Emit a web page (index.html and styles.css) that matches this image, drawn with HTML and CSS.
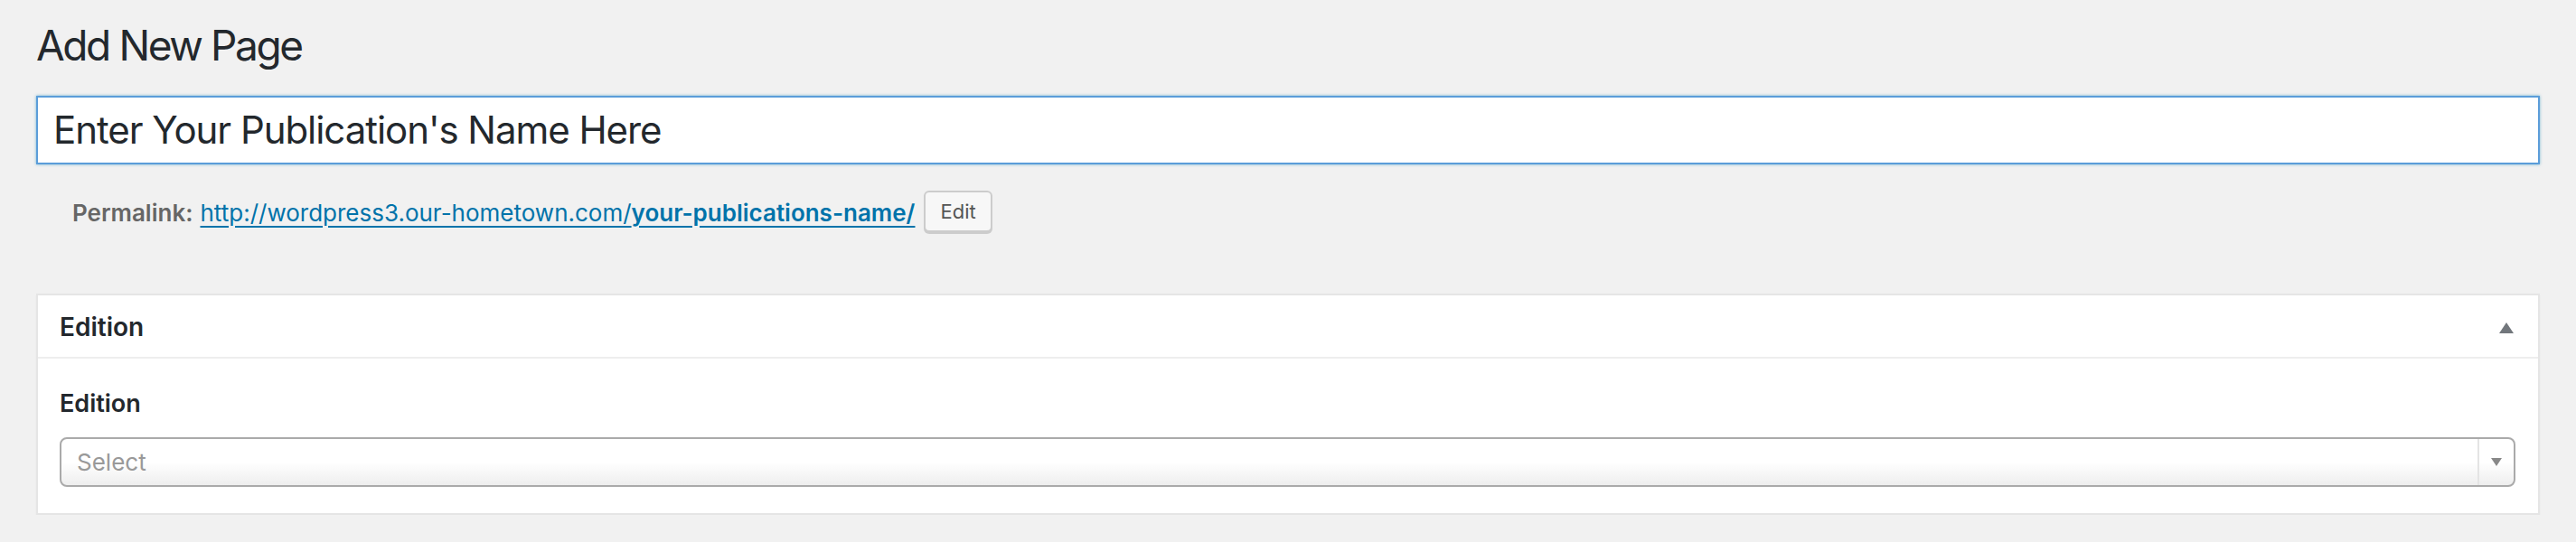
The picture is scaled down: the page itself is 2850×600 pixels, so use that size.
FILE: index.html
```html
<!DOCTYPE html>
<html lang="en">
<head>
<meta charset="utf-8">
<title>Add New Page</title>
<link rel="stylesheet" href="styles.css">
</head>
<body>
<div class="wrap">
  <h1 class="page-title">Add New Page</h1>
  <div class="title-input">Enter Your Publication's Name Here</div>
  <div class="slug-box">
    <span class="slug-label">Permalink:</span>
    <a class="slug-link" href="#">http://wordpress3.our-hometown.com/<strong>your-publications-name/</strong></a>
    <button class="btn" type="button">Edit</button>
  </div>
  <div class="postbox">
    <div class="postbox-head">
      <h2 class="postbox-title">Edition</h2>
      <span class="toggle-arrow"></span>
    </div>
    <div class="postbox-body">
      <div class="field-label">Edition</div>
      <div class="select">
        <span class="select-text">Select</span>
        <span class="select-arrow"><span class="caret"></span></span>
      </div>
    </div>
  </div>
</div>
</body>
</html>
```
FILE: styles.css
```css
* { box-sizing: border-box; }
html, body { margin: 0; padding: 0; }
body {
  background: #f1f1f1;
  font-family: Inter, "Liberation Sans", sans-serif;
  color: #23282d;
}
.wrap {
  padding: 20px 40px 0 40px;
}
.page-title {
  margin: 0;
  font-size: 46px;
  font-weight: 400;
  line-height: 60px;
  color: #23282d;
  letter-spacing: -2.4px;
}
.title-input {
  margin-top: 26px;
  height: 76px;
  background: #fff;
  border: 2px solid #5b9dd9;
  box-shadow: 0 0 3px rgba(30, 140, 190, 0.6);
  padding: 0 17px;
  font-size: 42px;
  line-height: 72px;
  color: #23282d;
  letter-spacing: -1.05px;
}
.slug-box {
  margin-top: 29px;
  padding-left: 40px;
  display: flex;
  align-items: center;
  height: 48px;
  font-size: 26px;
}
.slug-label {
  font-weight: 600;
  color: #666;
  margin-right: 8px;
}
.slug-link {
  color: #0073aa;
  text-decoration: underline;
  text-decoration-thickness: 2px;
  text-underline-offset: 5px;
}
.slug-link strong { font-weight: 600; }
.btn {
  margin-left: 10px;
  height: 46px;
  padding: 0 16px;
  border: 2px solid #ccc;
  border-radius: 6px;
  background: #f7f7f7;
  box-shadow: 0 2px 0 #ccc;
  font-family: Inter, "Liberation Sans", sans-serif;
  font-size: 22px;
  color: #555;
  align-self: flex-start;
}
.postbox {
  margin-top: 66px;
  background: #fff;
  border: 2px solid #e5e5e5;
  box-shadow: 0 2px 2px rgba(0, 0, 0, 0.04);
}
.postbox-head {
  display: flex;
  align-items: center;
  justify-content: space-between;
  padding: 16px 27px 13px 24px;
  border-bottom: 2px solid #eee;
}
.postbox-title {
  margin: 0;
  font-size: 28px;
  font-weight: 600;
  line-height: 39px;
  color: #23282d;
}
.toggle-arrow {
  width: 0;
  height: 0;
  border-left: 8px solid transparent;
  border-right: 8px solid transparent;
  border-bottom: 12px solid #72777c;
}
.postbox-body {
  padding: 32px 25px 29px 24px;
}
.field-label {
  font-size: 27px;
  font-weight: 600;
  line-height: 36px;
  color: #23282d;
}
.select {
  margin-top: 19px;
  height: 55px;
  display: flex;
  align-items: stretch;
  border: 2px solid #aaa;
  border-radius: 8px;
  background: linear-gradient(to bottom, #fff 50%, #eee 100%);
}
.select-text {
  flex: 1;
  padding-left: 17px;
  font-size: 26px;
  line-height: 51px;
  color: #999;
}
.select-arrow {
  width: 40px;
  border-left: 2px solid #e4e4e4;
  display: flex;
  align-items: center;
  justify-content: center;
}
.caret {
  width: 0;
  height: 0;
  border-left: 6px solid transparent;
  border-right: 6px solid transparent;
  border-top: 9px solid #888;
}
```
